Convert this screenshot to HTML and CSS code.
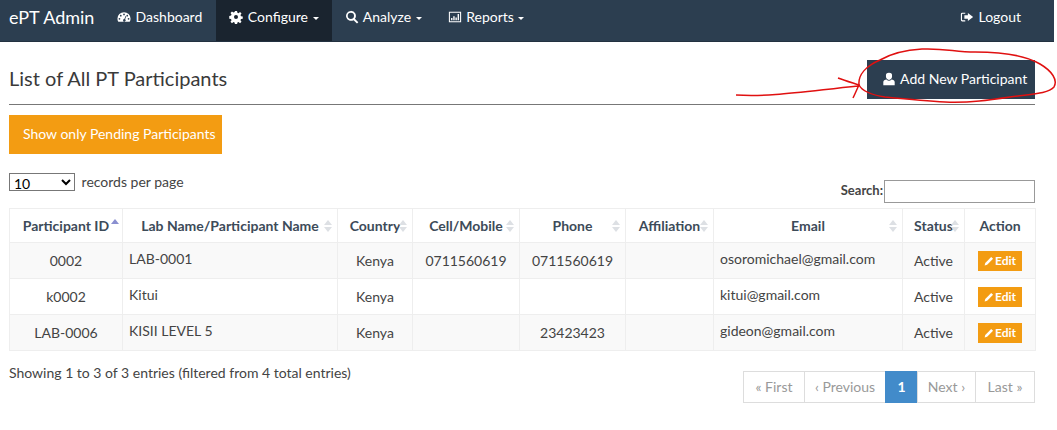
FILE: index.html

```html
<!DOCTYPE html>
<html lang="en">
<head>
  <meta charset="UTF-8">
  <title>ePT Admin - List of All PT Participants</title>
  <link rel="stylesheet" href="styles.css">
</head>
<body>
  <div class="page">
    <nav class="navbar">
      <a class="brand" href="#">ePT Admin</a>
      <ul class="nav-list">
        <li><a href="#">
          <svg class="icon" viewBox="0 0 16 16"><path fill-rule="evenodd" d="M8 2.5A7.5 7.5 0 0 0 .5 10c0 1.4.4 2.600 1 3.500h13c.6-.9 1-2.100 1-3.500A7.500 7.500 0 0 0 8 2.500zM8 4a1 1 0 1 1 0 2 1 1 0 0 1 0-2zM4.300 5.500a1 1 0 1 1 0 2 1 1 0 0 1 0-2zM11.700 5.500a1 1 0 1 1 0 2 1 1 0 0 1 0-2zM2.800 9a1 1 0 1 1 0 2 1 1 0 0 1 0-2zM13.200 9a1 1 0 1 1 0 2 1 1 0 0 1 0-2zM9.800 6.800l.8.4-1.300 3.300a1.500 1.500 0 1 1-.9-.3z"/></svg>
          Dashboard</a></li>
        <li class="active"><a href="#">
          <svg class="icon" viewBox="0 0 16 16"><path fill-rule="evenodd" d="M6.800 1h2.400l.4 2 1.300.6 1.700-1.200 1.700 1.700-1.200 1.700.6 1.300 2 .4v2.400l-2 .4-.6 1.300 1.200 1.700-1.700 1.700-1.700-1.200-1.300.6-.4 2H6.800l-.4-2-1.300-.6-1.700 1.200-1.700-1.700 1.200-1.700-.6-1.300-2-.4V6.800l2-.4.6-1.300-1.200-1.700 1.700-1.700 1.700 1.200 1.300-.6zM8 5.700a2.300 2.300 0 1 0 0 4.600 2.300 2.300 0 0 0 0-4.600z"/></svg>
          Configure <span class="caret"></span></a></li>
        <li><a href="#">
          <svg class="icon" viewBox="0 0 16 16"><path fill-rule="evenodd" d="M6.700 1a5.700 5.700 0 0 1 4.600 9.100l3.900 3.900-1.500 1.500-3.900-3.900A5.700 5.700 0 1 1 6.700 1zm0 2.100a3.600 3.600 0 1 0 0 7.200 3.600 3.600 0 0 0 0-7.200z"/></svg>
          Analyze <span class="caret"></span></a></li>
        <li><a href="#">
          <svg class="icon" viewBox="0 0 16 16"><path fill-rule="evenodd" d="M1 2h14v12H1zm1.200 1.200v9.600h11.600V3.200zM3.500 9h1.600v2.800H3.500zM6 7h1.600v4.800H6zM8.500 8.500h1.600v3.300H8.500zM11 4.500h1.600v7.300H11z"/></svg>
          Reports <span class="caret"></span></a></li>
      </ul>
      <a class="logout" href="#">
        <svg class="icon" viewBox="0 0 16 16"><path d="M6 3H2.500A1.500 1.500 0 0 0 1 4.500v7A1.500 1.500 0 0 0 2.500 13H6v-1.300H2.800a.5.500 0 0 1-.5-.5V4.800a.5.500 0 0 1 .5-.5H6z"/><path d="M9 3.500 15 8l-6 4.500V10H5V6h4z"/></svg>
        Logout</a>
    </nav>

    <main class="content">
      <div class="title-row">
        <h1>List of All PT Participants</h1>
        <a class="btn btn-dark" href="#">
          <svg class="icon" viewBox="0 0 16 16"><path d="M8 1a3.500 3.500 0 0 1 3.500 3.800C11.500 7 10 9 8 9S4.500 7 4.500 4.800A3.500 3.500 0 0 1 8 1zM5.200 8.700C6 9.600 7 10.100 8 10.100s2-.5 2.800-1.400c2 .4 3.700 1.300 3.700 2.800V15h-13v-3.500c0-1.500 1.700-2.400 3.700-2.800z"/></svg>
          Add New Participant</a>
      </div>

      <a class="btn btn-orange" href="#">Show only Pending Participants</a>

      <div class="table-controls">
        <label class="length"><select><option>10</option></select> records per page</label>
        <label class="search">Search:<input type="text"></label>
      </div>

      <table class="data-table">
        <thead>
          <tr>
            <th class="sorted">Participant ID</th>
            <th class="sortable">Lab Name/Participant Name</th>
            <th class="sortable">Country</th>
            <th class="sortable">Cell/Mobile</th>
            <th class="sortable">Phone</th>
            <th class="sortable">Affiliation</th>
            <th class="sortable">Email</th>
            <th class="sortable">Status</th>
            <th>Action</th>
          </tr>
        </thead>
        <tbody>
          <tr>
            <td class="center">0002</td>
            <td class="raised">LAB-0001</td>
            <td class="center">Kenya</td>
            <td class="center">0711560619</td>
            <td class="center">0711560619</td>
            <td></td>
            <td class="raised">osoromichael@gmail.com</td>
            <td class="center">Active</td>
            <td class="center"><a class="edit" href="#"><svg class="icon-sm" viewBox="0 0 16 16"><path d="M11.500 1.500l3 3L5 14l-4 1 1-4z"/></svg>Edit</a></td>
          </tr>
          <tr>
            <td class="center">k0002</td>
            <td class="raised">Kitui</td>
            <td class="center">Kenya</td>
            <td></td>
            <td></td>
            <td></td>
            <td class="raised">kitui@gmail.com</td>
            <td class="center">Active</td>
            <td class="center"><a class="edit" href="#"><svg class="icon-sm" viewBox="0 0 16 16"><path d="M11.500 1.500l3 3L5 14l-4 1 1-4z"/></svg>Edit</a></td>
          </tr>
          <tr>
            <td class="center">LAB-0006</td>
            <td class="raised">KISII LEVEL 5</td>
            <td class="center">Kenya</td>
            <td></td>
            <td class="center">23423423</td>
            <td></td>
            <td class="raised">gideon@gmail.com</td>
            <td class="center">Active</td>
            <td class="center"><a class="edit" href="#"><svg class="icon-sm" viewBox="0 0 16 16"><path d="M11.500 1.500l3 3L5 14l-4 1 1-4z"/></svg>Edit</a></td>
          </tr>
        </tbody>
      </table>

      <div class="table-footer">
        <p class="info">Showing 1 to 3 of 3 entries (filtered from 4 total entries)</p>
        <ul class="pagination">
          <li class="page-first"><a href="#">&laquo; First</a></li>
          <li class="page-prev"><a href="#">&lsaquo; Previous</a></li>
          <li class="page-current"><a href="#">1</a></li>
          <li class="page-next"><a href="#">Next &rsaquo;</a></li>
          <li class="page-last"><a href="#">Last &raquo;</a></li>
        </ul>
      </div>
    </main>

    <!-- hand drawn red marker on top of the screenshot -->
    <svg class="scribble" viewBox="0 0 1057 430">
      <path d="M736 95C770 97 800 92 858 86M838 78C846 81 853 83 859 85C857 89 855 94 853 98"/>
      <path d="M859 85C858 75 866 66 880 60C892 53 905 50 922 49C945 48 955 52 975 52C1000 52 1025 55 1040 64C1052 71 1058 80 1054 87C1048 94 1030 94 1010 97C990 100 970 103 945 102C925 101 905 99 885 97C872 95 862 91 859 85Z"/>
    </svg>
  </div>
</body>
</html>
```

FILE: styles.css

```css
/* Reset */
* { margin: 0; padding: 0; box-sizing: border-box; }
html, body {
  background: #fff;
  font-family: 'Lato', 'Liberation Sans', sans-serif;
  font-size: 14px;
  color: #444;
}
a { text-decoration: none; }
ul { list-style: none; }

.page {
  position: relative;
  width: 1057px;
  height: 430px;
  overflow: hidden;
}

/* Navbar */
.navbar {
  display: flex;
  align-items: stretch;
  width: 1054px;
  height: 42px;
  background: #2c3e50;
  border-bottom: 1px solid #233140;
  color: #fff;
}
.navbar a { color: #fff; }
.brand {
  width: 105px;
  padding: 6px 0 0 9px;
  font-size: 18px;
}
.nav-list { display: flex; }
.nav-list a {
  display: block;
  height: 41px;
  padding: 8px 13px 0;
  white-space: nowrap;
}
.nav-list li:first-child a { padding-left: 12px; padding-right: 14px; }
.nav-list .active a { background: #1a242f; }
.icon {
  width: 14px;
  height: 14px;
  margin-right: 1px;
  vertical-align: -2px;
  fill: currentColor;
}
.caret {
  display: inline-block;
  margin-left: 1px;
  vertical-align: middle;
  border-top: 3px solid #fff;
  border-left: 3px solid transparent;
  border-right: 3px solid transparent;
}
.logout {
  margin-left: auto;
  padding: 8px 33px 0 0;
}

/* Content */
.content { padding: 0 22px 0 9px; }
.title-row {
  display: flex;
  justify-content: space-between;
  align-items: flex-start;
  height: 63px;
  padding-top: 18px;
  border-bottom: 1px solid #777;
}
.title-row h1 {
  padding-top: 6px;
  font-size: 20px;
  font-weight: 400;
  line-height: 24px;
  color: #3a3a3a;
}
.btn {
  display: inline-block;
  height: 39px;
  line-height: 38px;
  color: #fff;
  white-space: nowrap;
}
.btn-dark {
  width: 168px;
  padding-left: 15px;
  background: #2c3e50;
}
.btn-orange {
  width: 213px;
  margin-top: 10px;
  padding-left: 14px;
  background: #f39c12;
  font-size: 14px;
}

.table-controls {
  display: flex;
  justify-content: space-between;
  height: 35px;
  margin-top: 19px;
}
.length { font-size: 14px; padding-top: 0; }
.length select {
  width: 66px;
  height: 18px;
  margin-right: 3px;
  border: 1px solid #777;
  background: #fff;
  font-family: 'Lato', 'Liberation Sans', sans-serif;
  font-size: 14px;
  vertical-align: -2px;
}
.search { padding-top: 7px; font-weight: 700; font-size: 13px; }
.search input {
  width: 151px;
  height: 23px;
  margin-left: 1px;
  border: 1px solid #999;
  vertical-align: -1px;
}

/* Table */
.data-table {
  width: 1026px;
  border-collapse: collapse;
  table-layout: fixed;
}
.data-table th:nth-child(1) { width: 113px; }
.data-table th:nth-child(2) { width: 215px; }
.data-table th:nth-child(3) { width: 75px; }
.data-table th:nth-child(4) { width: 107px; }
.data-table th:nth-child(5) { width: 106px; }
.data-table th:nth-child(6) { width: 88px; }
.data-table th:nth-child(7) { width: 189px; }
.data-table th:nth-child(8) { width: 62px; }
.data-table th:nth-child(9) { width: 71px; }
.data-table th,
.data-table td { border: 1px solid #eee; }
.data-table th {
  position: relative;
  height: 34px;
  font-weight: 700;
  font-size: 14px;
  color: #3d4b59;
  white-space: nowrap;
}
.data-table td {
  height: 36px;
  padding: 0 6px;
  font-size: 14px;
  white-space: nowrap;
}
.data-table tbody tr:nth-child(odd) td { background: #f9f9f9; }
.center { text-align: center; }
.raised { padding-bottom: 5px !important; }

/* Sort arrows */
.sortable::before,
.sortable::after,
.sorted::before {
  content: "";
  position: absolute;
  right: 5px;
  border-left: 4px solid transparent;
  border-right: 4px solid transparent;
}
.sortable::before { top: 11px; border-bottom: 5px solid #dde0e4; }
.sortable::after { top: 18px; border-top: 5px solid #dde0e4; }
.sorted::before {
  top: 10px;
  right: 3px;
  border-bottom: 5px solid #8a8fd0;
}

.edit {
  display: inline-block;
  width: 44px;
  height: 20px;
  line-height: 20px;
  background: #f39c12;
  color: #fff;
  font-size: 12px;
  font-weight: 700;
  text-align: center;
}
.icon-sm {
  width: 10px;
  height: 10px;
  margin-right: 1px;
  vertical-align: -1px;
  fill: #fff;
}

/* Footer of the table */
.table-footer {
  display: flex;
  justify-content: space-between;
  align-items: flex-start;
  margin-top: 13px;
}
.info { font-size: 14px; line-height: 18px; }
.pagination {
  display: flex;
  height: 32px;
  margin-top: 7px;
}
.pagination li { border: 1px solid #ddd; margin-left: -1px; }
.pagination a {
  display: block;
  line-height: 29px;
  text-align: center;
  color: #999;
}
.page-first { width: 62px; }
.page-prev { width: 82px; }
.page-next { width: 59px; }
.page-last { width: 60px; }
.pagination .page-current {
  width: 33px;
  background: #428bca;
  border-color: #428bca;
}
.pagination .page-current a { color: #fff; font-weight: 700; }

/* Red marker */
.scribble {
  position: absolute;
  top: 0;
  left: 0;
  width: 1057px;
  height: 430px;
  fill: none;
  stroke: #e01010;
  stroke-width: 1.5;
  pointer-events: none;
}
```
